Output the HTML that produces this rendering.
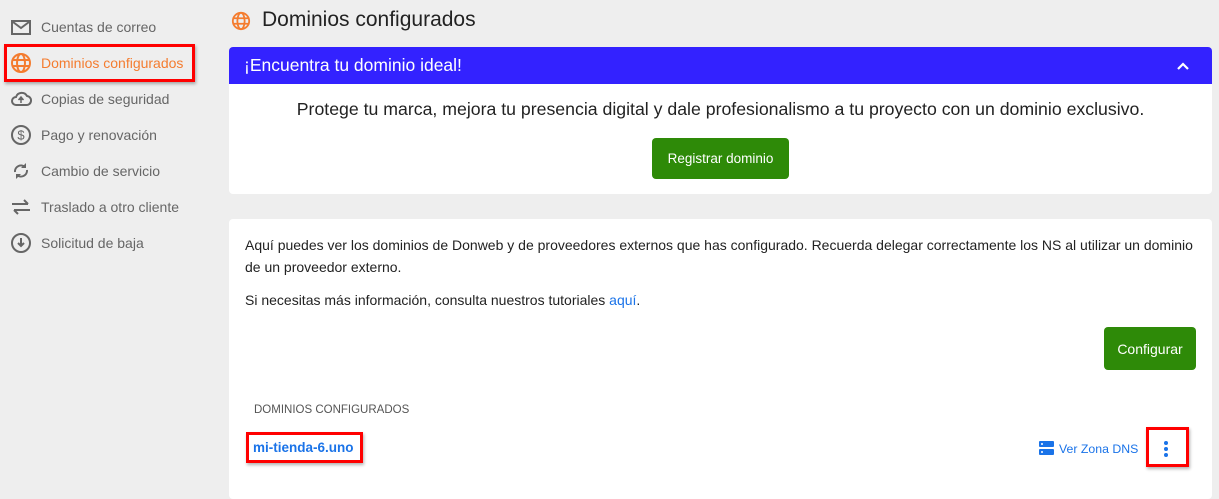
<!DOCTYPE html>
<html><head><meta charset="utf-8"><style>
*{box-sizing:border-box;margin:0;padding:0}
body{width:1219px;height:487px;background:#eeeeee;font-family:"Liberation Sans",sans-serif;position:relative;overflow:hidden;color:#222}
.nav{position:absolute;left:0;top:0;width:215px}
.item{position:absolute;left:10px;height:24px;display:flex;align-items:center;font-size:14px;color:#666}
.item svg{width:22px;height:22px;margin-right:9px;flex:none}
.active{color:#f47c2f}
.redbox{position:absolute;border:3px solid #f00;box-shadow:1px 2px 3px rgba(0,0,0,.3)}
h1{position:absolute;left:262px;top:8px;font-size:21px;font-weight:normal;color:#222}
.card{position:absolute;left:229px;width:983px;background:#fff;border-radius:4px}
.bhead{position:absolute;left:229px;top:47px;width:983px;height:37px;background:#3322ff;color:#fff;font-size:17.5px;padding:8px 0 0 15px;border-radius:4px 4px 0 0}
.btn{position:absolute;background:#2e8a08;color:#fff;font-size:13.5px;border-radius:4px;display:flex;align-items:center;justify-content:center}
p{position:absolute;font-size:14px;color:#222;line-height:22px;white-space:nowrap}
a{color:#1a73e8;text-decoration:none}
</style></head><body>
<div class="nav">
<div class="item" style="top:15px"><svg viewBox="0 0 22 22"><rect x="2" y="5" width="18" height="13" fill="none" stroke="#666" stroke-width="2"/><path d="M3 6l8 6 8-6" fill="none" stroke="#666" stroke-width="2"/></svg>Cuentas de correo</div>
<div class="item active" style="top:51px"><svg viewBox="0 0 22 22"><g fill="none" stroke="#f47c2f" stroke-width="2"><circle cx="11" cy="11" r="9"/><ellipse cx="11" cy="11" rx="4" ry="9"/><path d="M2 8h18M2 14h18"/></g></svg>Dominios configurados</div>
<div class="item" style="top:87px"><svg viewBox="0 0 22 22"><path d="M6 17a4 4 0 010-8 6 6 0 0111-1 4.5 4.5 0 01-1 9z" fill="none" stroke="#666" stroke-width="2"/><path d="M11 15v-5M8.5 12l2.5-3 2.5 3" fill="#666" stroke="#666" stroke-width="1.5"/></svg>Copias de seguridad</div>
<div class="item" style="top:123px"><svg viewBox="0 0 22 22"><circle cx="11" cy="11" r="9" fill="none" stroke="#666" stroke-width="2"/><text x="11" y="15.5" font-size="13" text-anchor="middle" fill="#666" font-family="Liberation Sans">$</text></svg>Pago y renovación</div>
<div class="item" style="top:159px"><svg viewBox="0 0 22 22"><path d="M5 12a6 6 0 0110-5M17 10a6 6 0 01-10 5" fill="none" stroke="#666" stroke-width="2"/><path d="M16 3v5h-5zM6 19v-5h5z" fill="#666"/></svg>Cambio de servicio</div>
<div class="item" style="top:195px"><svg viewBox="0 0 22 22"><path d="M2 8h16M14 4l4 4M20 14H4M8 18l-4-4" fill="none" stroke="#666" stroke-width="2"/></svg>Traslado a otro cliente</div>
<div class="item" style="top:231px"><svg viewBox="0 0 22 22"><circle cx="11" cy="11" r="9" fill="none" stroke="#666" stroke-width="2"/><path d="M11 6v8M8 11l3 3 3-3" fill="none" stroke="#666" stroke-width="2"/></svg>Solicitud de baja</div>
</div>
<div class="redbox" style="left:4px;top:44px;width:191px;height:38px"></div>
<svg style="position:absolute;left:231px;top:11px" width="20" height="20" viewBox="0 0 22 22"><g fill="none" stroke="#f47c2f" stroke-width="2"><circle cx="11" cy="11" r="9"/><ellipse cx="11" cy="11" rx="4" ry="9"/><path d="M2 8h18M2 14h18"/></g></svg>
<h1>Dominios configurados</h1>
<div class="card" style="top:47px;height:147px"></div>
<div class="bhead">¡Encuentra tu dominio ideal!</div>
<svg style="position:absolute;left:1176px;top:59px" width="14" height="14" viewBox="0 0 14 14"><path d="M2 10l5-5 5 5" fill="none" stroke="#fff" stroke-width="2.2"/></svg>
<p style="left:229px;width:983px;text-align:center;top:98px;font-size:17.7px">Protege tu marca, mejora tu presencia digital y dale profesionalismo a tu proyecto con un dominio exclusivo.</p>
<div class="btn" style="left:652px;top:138px;width:137px;height:41px">Registrar dominio</div>
<div class="card" style="top:219px;height:280px"></div>
<p style="left:245px;top:234px">Aquí puedes ver los dominios de Donweb y de proveedores externos que has configurado. Recuerda delegar correctamente los NS al utilizar un dominio<br>de un proveedor externo.</p>
<p style="left:245px;top:289px">Si necesitas más información, consulta nuestros tutoriales <a>aquí</a>.</p>
<div class="btn" style="left:1104px;top:327px;width:92px;height:43px;font-size:14px">Configurar</div>
<p style="left:254px;top:399px;font-size:11.5px;color:#555">DOMINIOS CONFIGURADOS</p>
<p style="left:253px;top:437px;font-weight:bold;font-size:13.5px"><a>mi-tienda-6.uno</a></p>
<div class="redbox" style="left:246px;top:432px;width:117px;height:31px"></div>
<svg style="position:absolute;left:1039px;top:441px" width="15" height="14" viewBox="0 0 15 14"><rect x="0" y="0" width="15" height="6" rx="1" fill="#1a73e8"/><rect x="0" y="8" width="15" height="6" rx="1" fill="#1a73e8"/><circle cx="3" cy="3" r="1" fill="#fff"/><circle cx="3" cy="11" r="1" fill="#fff"/></svg>
<p style="left:1059px;top:438px;font-size:12.3px"><a>Ver Zona DNS</a></p>
<div class="redbox" style="left:1146px;top:427px;width:43px;height:40px"></div>
<svg style="position:absolute;left:1163px;top:440px" width="6" height="18" viewBox="0 0 6 18"><circle cx="3" cy="3" r="2" fill="#1a73e8"/><circle cx="3" cy="9" r="2" fill="#1a73e8"/><circle cx="3" cy="15" r="2" fill="#1a73e8"/></svg>
</body></html>
